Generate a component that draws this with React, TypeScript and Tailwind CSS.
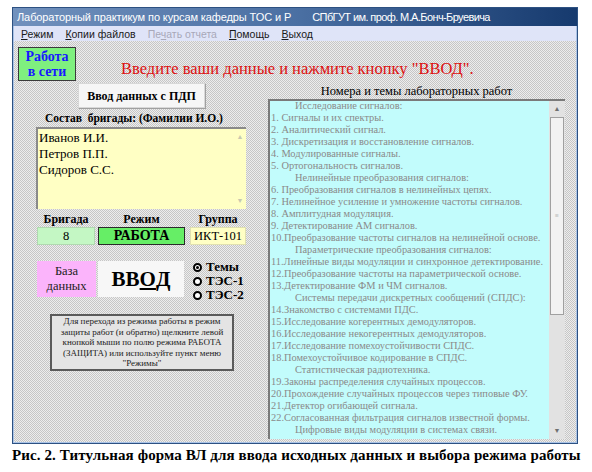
const topics: [string, boolean][] = [
  ["Исследование сигналов:", true],
  ["1. Сигналы и их спектры.", false],
  ["2. Аналитический сигнал.", false],
  ["3. Дискретизация и восстановление сигналов.", false],
  ["4. Модулированные сигналы.", false],
  ["5. Ортогональность сигналов.", false],
  ["Нелинейные преобразования сигналов:", true],
  ["6. Преобразования сигналов в нелинейных цепях.", false],
  ["7. Нелинейное усиление и умножение частоты сигналов.", false],
  ["8. Амплитудная модуляция.", false],
  ["9. Детектирование АМ сигналов.", false],
  ["10.Преобразование частоты сигналов на нелинейной основе.", false],
  ["Параметрические преобразования сигналов:", true],
  ["11.Линейные виды модуляции и синхронное детектирование.", false],
  ["12.Преобразование частоты на параметрической основе.", false],
  ["13.Детектирование ФМ и ЧМ сигналов.", false],
  ["Системы передачи дискретных сообщений (СПДС):", true],
  ["14.Знакомство с системами ПДС.", false],
  ["15.Исследование когерентных демодуляторов.", false],
  ["16.Исследование некогерентных демодуляторов.", false],
  ["17.Исследование помехоустойчивости СПДС.", false],
  ["18.Помехоустойчивое кодирование в СПДС.", false],
  ["Статистическая радиотехника.", true],
  ["19.Законы распределения случайных процессов.", false],
  ["20.Прохождение случайных процессов через типовые ФУ.", false],
  ["21.Детектор огибающей сигнала.", false],
  ["22.Согласованная фильтрация сигналов известной формы.", false],
  ["Цифровые виды модуляции в системах связи.", true],
];

function Radio({ label, checked }: { label: string; checked?: boolean }) {
  return (
    <div className="flex items-center gap-[4px] h-[14px]">
      <span className="w-[9px] h-[9px] rounded-full border-[2px] border-black bg-white flex items-center justify-center">
        {checked && <span className="w-[3px] h-[3px] rounded-full bg-black" />}
      </span>
      <span className="text-[13px] font-bold leading-[14px]">{label}</span>
    </div>
  );
}

export default function App() {
  return (
    <div className="w-[592px] h-[472px] bg-white pt-[7px] pl-[12px] font-[family-name:Liberation_Serif,serif] text-black">
      <div className="w-[566px] h-[437px] flex flex-col border border-[#2d5182] bg-[#a9c3e6]">
        {/* title bar */}
        <div className="h-[18px] flex items-center gap-[21px] pl-[4px] text-white text-[11px] font-[family-name:Liberation_Sans,sans-serif] bg-gradient-to-r from-[#7191bd] via-[#4b70a3] to-[#163a6e]">
          <span className="tracking-[-0.1px]">Лабораторный практикум по курсам кафедры ТОС и Р</span>
          <span className="tracking-[-0.6px]">СПбГУТ им. проф. М.А.Бонч-Бруевича</span>
        </div>
        {/* menu bar */}
        <div className="h-[15px] flex items-center gap-[12px] pl-[7px] mx-[1px] bg-[#dfe4f8] text-[10.5px] leading-[14px] font-[family-name:Liberation_Sans,sans-serif] text-[#1a1a1a]">
          <span><u>Р</u>ежим</span>
          <span><u>К</u>опии файлов</span>
          <span className="text-[#a8a8b8]">Пе<u>ч</u>ать отчета</span>
          <span><u>П</u>омощь</span>
          <span><u>В</u>ыход</span>
        </div>
        {/* client area */}
        <div className="flex-1 mx-[1px] mb-[1px] flex flex-col bg-[repeating-conic-gradient(#c6c6c6_0%_25%,#ededed_0%_50%)] bg-size-[2px_2px]">
          <div className="flex items-start h-[40px]">
            <div className="mt-[6px] ml-[4px] w-[58px] h-[34px] bg-[#7ff07f] border border-[#3a3a3a] flex flex-col items-center justify-center text-[#1818ff] text-[14px] font-bold leading-[15px]">
              <span>Работа</span>
              <span>в сети</span>
            </div>
            <div className="ml-[45px] mt-[18px] text-[16.5px] leading-[20px] text-[#dd1010]">
              Введите ваши данные и нажмите кнопку "ВВОД".
            </div>
          </div>
          <div className="flex">
            {/* left column */}
            <div className="w-[254px] flex flex-col">
              <div className="mt-[2px] ml-[64px] w-[127px] h-[25px] bg-[#f6f6f6] border border-[#d8d8d8] shadow-[1px_1px_0_#a0a0a0] flex items-center justify-center text-[12px] font-bold">
                Ввод данных с ПДП
              </div>
              <div className="mt-[3px] ml-[31px] text-[11.5px] font-bold leading-[14px] whitespace-pre">
                Состав  бригады: (Фамилии И.О.)
              </div>
              <div className="mt-[2px] ml-[22px] w-[210px] h-[82px] bg-[#ffffc4] border-t-[2px] border-l-[2px] border-[#8a8a8a] flex">
                <div className="flex-1 pl-[1px] pt-[1px] text-[13px] leading-[16px]">
                  <div>Иванов И.И.</div>
                  <div>Петров П.П.</div>
                  <div>Сидоров С.С.</div>
                </div>
                <div className="w-[12px] flex flex-col items-center justify-between py-[4px] text-[7px] text-[#c8c8b0] leading-[8px]">
                  <span>▲</span>
                  <span>▼</span>
                </div>
              </div>
              <div className="mt-[3px] ml-[23px] flex text-[12px] font-bold leading-[14px]">
                <div className="w-[58px] text-center">Бригада</div>
                <div className="ml-[3px] w-[87px] text-center">Режим</div>
                <div className="ml-[5px] w-[56px] text-center">Группа</div>
              </div>
              <div className="mt-[1px] ml-[23px] flex h-[18px] text-[12.5px] leading-[16px]">
                <div className="w-[58px] bg-[#c4f7c4] border border-[#b0d8b0] text-center">8</div>
                <div className="ml-[3px] w-[87px] bg-[#66ee66] border border-[#2a2a2a] text-center font-bold text-[14px] leading-[16px]">
                  РАБОТА
                </div>
                <div className="ml-[5px] w-[56px] bg-[#ffffc4] border border-[#e0e0b0] text-center">ИКТ-101</div>
              </div>
              <div className="mt-[16px] ml-[23px] flex items-start">
                <div className="w-[59px] h-[36px] bg-[#fbb4fb] flex flex-col items-center justify-center text-[12.5px] leading-[15px] text-[#222]">
                  <span>База</span>
                  <span>данных</span>
                </div>
                <div className="ml-[2px] w-[86px] h-[36px] bg-[#f7f7f7] flex items-center justify-center text-[21px] font-bold leading-[26px]">
                  ВВ<u>О</u>Д
                </div>
                <div className="ml-[9px] -mt-[1px] flex flex-col">
                  <Radio label="Темы" checked />
                  <Radio label="ТЭС-1" />
                  <Radio label="ТЭС-2" />
                </div>
              </div>
              <div className="mt-[12px] ml-[36px] w-[184px] h-[57px] bg-[#e4e4e4] border-[2px] border-[#5a5a5a] flex items-center justify-center text-center text-[9px] leading-[10.5px] text-[#222] whitespace-nowrap">
                <div>
                  Для перехода из режима работы в режим
                  <br />
                  защиты работ (и обратно) щелкните левой
                  <br />
                  кнопкой мыши по полю режима РАБОТА
                  <br />
                  (ЗАЩИТА) или используйте пункт меню
                  <br />
                  "Режимы"
                </div>
              </div>
            </div>
            {/* right column */}
            <div className="flex flex-col">
              <div className="mt-[3px] w-[297px] text-center text-[12.5px] leading-[14px]">
                Номера и темы лабораторных работ
              </div>
              <div className="mt-[1px] w-[297px] h-[340px] flex border-t-[2px] border-l-[2px] border-[#7a7a7a]">
                <div className="flex-1 bg-[#c2fcfc] overflow-hidden">
                  <div className="-mt-[1px] pl-[1px] text-[10.4px] leading-[12px] text-[#8a8a8a] whitespace-nowrap">
                    {topics.map(([t, h], i) => (
                      <div key={i} className={h ? "pl-[24px]" : ""}>
                        {t}
                      </div>
                    ))}
                  </div>
                </div>
                <div className="w-[16px] bg-[#e2e2e2] flex flex-col">
                  <div className="h-[16px] flex items-center justify-center text-[7px] text-[#707070]">▲</div>
                  <div className="h-[198px] mx-[1px] bg-[#f2f2f2] border border-[#a0a0a0] flex items-center justify-center text-[7px] text-[#808080]">
                    ≡
                  </div>
                  <div className="flex-1" />
                  <div className="h-[16px] flex items-center justify-center text-[7px] text-[#707070]">▼</div>
                </div>
              </div>
            </div>
          </div>
        </div>
      </div>
      <div className="mt-[3px] text-[15px] font-bold leading-[16px] tracking-[0.1px] whitespace-nowrap">
        Рис. 2. Титульная форма ВЛ для ввода исходных данных и выбора режима работы
      </div>
    </div>
  );
}
